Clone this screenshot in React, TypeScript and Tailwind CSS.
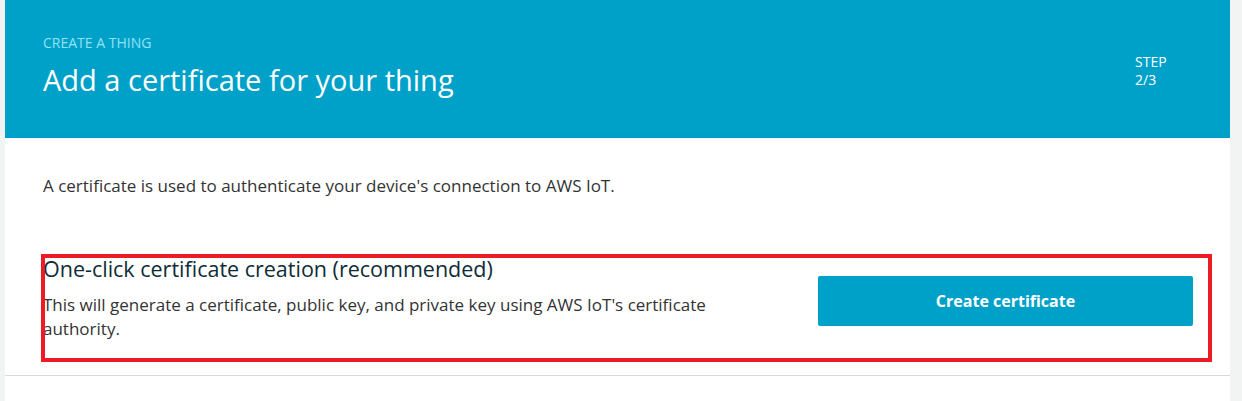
export default function App() {
  return (
    <div
      className="h-[401px] w-[1242px] overflow-hidden bg-[#f2f3f3] pl-[5px] pr-[12px]"
      style={{ fontFamily: '"Open Sans", "Liberation Sans", sans-serif' }}
    >
      <div className="flex h-full flex-col bg-white">
        <header className="flex h-[138px] shrink-0 justify-between bg-[#00a1c9] pl-[38px] pr-[58px]">
          <div className="pt-[34px]">
            <div className="text-[14px] leading-[18px] font-medium uppercase text-[#92e2f6]">
              Create a thing
            </div>
            <h1 className="mt-[10px] text-[29px] leading-[36px] font-normal text-white">
              Add a certificate for your thing
            </h1>
          </div>
          <div className="w-[37px] pt-[53px] text-[14px] leading-[18px] font-medium text-white">
            STEP
            <br />
            2/3
          </div>
        </header>

        <section className="border-b border-[#d5dbdb] px-[38px] pt-[36px]">
          <p className="text-[17px] leading-[24px] text-[#333]">
            A certificate is used to authenticate your device's connection to AWS IoT.
          </p>

          <div className="relative mt-[57px] flex items-start justify-between pb-[34px]">
            <div className="w-[690px]">
              <h2 className="text-[21.5px] leading-[28px] font-normal text-[#0d2c38]">
                One-click certificate creation (recommended)
              </h2>
              <p className="mt-[10px] text-[17px] leading-[24px] text-[#333]">
                This will generate a certificate, public key, and private key using AWS IoT's certificate authority.
              </p>
            </div>
            <button className="mr-[-1px] mt-[21px] h-[50px] w-[375px] rounded-[2px] bg-[#00a1c9] text-[16px] font-bold text-white">
              Create certificate
            </button>
            <div className="pointer-events-none absolute top-[-1px] left-[-2px] h-[108px] w-[1171px] border-[4px] border-[#ed1c24]" />
          </div>
        </section>

        <div className="flex-1 bg-white" />
      </div>
    </div>
  );
}
